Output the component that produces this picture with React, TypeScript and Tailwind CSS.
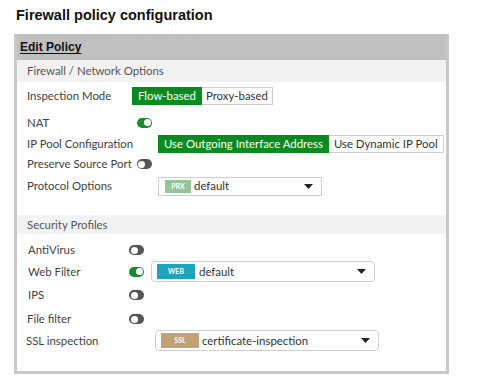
import React from "react";

function Toggle({ on }: { on?: boolean }) {
  return on ? (
    <span className="relative inline-block h-[10px] w-[15px] shrink-0 rounded-full bg-[#1b8a2b]">
      <span className="absolute right-[1.5px] top-[1.5px] h-[7px] w-[7px] rounded-full bg-white" />
    </span>
  ) : (
    <span className="relative inline-block h-[10px] w-[15px] shrink-0 rounded-full bg-[#555555]">
      <span className="absolute left-[1.5px] top-[1.5px] h-[7px] w-[7px] rounded-full bg-white" />
    </span>
  );
}

function Caret() {
  return (
    <svg width="9" height="5" viewBox="0 0 9 5" className="block">
      <path d="M0 0 H9 L4.5 5 Z" fill="#222" />
    </svg>
  );
}

export default function App() {
  return (
    <div
      className="h-[388px] w-[488px] overflow-hidden whitespace-nowrap bg-white text-[#3f3f3f]"
      style={{ fontFamily: "Lato, 'Open Sans', sans-serif" }}
    >
      <div className="flex h-[34px] items-center pl-[16px] pb-[2px] text-[14.5px] font-bold text-[#111]" style={{ fontFamily: "'Liberation Sans', Arial, sans-serif" }}>
        Firewall policy configuration
      </div>
      <div className="ml-[14px] h-[340px] w-[435px] border-[3px] border-t-0 border-[#c8c8c8]">
        <div className="flex h-[26px] items-center bg-[#c0c0c0] pl-[3px] text-[12px] font-bold text-[#111] underline underline-offset-2" style={{ fontFamily: "'Liberation Sans', Arial, sans-serif" }}>
          Edit Policy
        </div>
        <div className="flex h-[22px] items-center bg-[#f2f2f2] pl-[10px] text-[11.4px] text-[#555]">
          Firewall / Network Options
        </div>
        {/* Inspection mode */}
        <div className="flex h-[28px] items-center pl-[10px] text-[11.4px]">
          <span className="w-[105px]">Inspection Mode</span>
          <div className="flex h-[18px]">
            <span className="flex items-center bg-[#0b8a1f] px-[6px] text-white">Flow-based</span>
            <span className="flex items-center border border-l-0 border-[#cfcfcf] px-[4px] text-[#333]">Proxy-based</span>
          </div>
        </div>
        {/* NAT */}
        <div className="flex h-[23px] items-center pl-[10px] pt-[2px] text-[11.4px]">
          <span className="w-[110px]">NAT</span>
          <Toggle on />
        </div>
        {/* IP Pool */}
        <div className="flex h-[21px] items-center pl-[10px] text-[11.4px]">
          <span className="w-[131px]">IP Pool Configuration</span>
          <div className="flex h-[18px]">
            <span className="flex items-center bg-[#0b8a1f] px-[6px] text-white">Use Outgoing Interface Address</span>
            <span className="flex items-center border border-l-0 border-[#cfcfcf] px-[5px] text-[#333]">Use Dynamic IP Pool</span>
          </div>
        </div>
        {/* Preserve */}
        <div className="flex h-[20px] items-center pl-[10px] text-[11.4px]">
          <span className="mr-[5px]">Preserve Source Port</span>
          <Toggle />
        </div>
        {/* Protocol options */}
        <div className="flex h-[24px] items-center pl-[10px] text-[11.4px]">
          <span className="w-[131px]">Protocol Options</span>
          <div className="flex h-[19px] w-[164px] items-center border border-[#cfcfcf] pl-[6px] pr-[8px]">
            <span className="flex h-[13px] w-[26px] items-center justify-center bg-[#93c59b] text-[7px] font-bold text-white">PRX</span>
            <span className="ml-[3px] flex-1 text-[#333]">default</span>
            <Caret />
          </div>
        </div>
        <div className="h-[17px]" />
        <div className="flex h-[19px] items-center bg-[#f2f2f2] pl-[10px] text-[11.4px] text-[#555]">
          Security Profiles
        </div>
        <div className="h-[5px]" />
        {/* AntiVirus */}
        <div className="flex h-[22px] items-center pl-[11px] text-[11.4px]">
          <span className="w-[101px]">AntiVirus</span>
          <Toggle />
        </div>
        {/* Web filter */}
        <div className="flex h-[21px] items-center pl-[11px] text-[11.4px]">
          <span className="w-[101px]">Web Filter</span>
          <Toggle on />
          <div className="ml-[7px] flex h-[21px] w-[224px] items-center rounded-[4px] border border-[#cfcfcf] pl-[5px] pr-[8px]">
            <span className="flex h-[15px] w-[38px] items-center justify-center bg-[#1ea3bd] text-[7px] font-bold text-white">WEB</span>
            <span className="ml-[4px] flex-1 text-[#333]">default</span>
            <Caret />
          </div>
        </div>
        {/* IPS */}
        <div className="flex h-[26px] items-center pl-[11px] text-[11.4px]">
          <span className="w-[101px]">IPS</span>
          <Toggle />
        </div>
        {/* File filter */}
        <div className="flex h-[22px] items-center pl-[10px] text-[11.4px]">
          <span className="w-[102px]">File filter</span>
          <Toggle />
        </div>
        {/* SSL */}
        <div className="flex h-[21px] items-center pl-[9px] text-[11.4px]">
          <span className="w-[129px]">SSL inspection</span>
          <div className="flex h-[21px] w-[224px] items-center rounded-[4px] border border-[#cfcfcf] pl-[5px] pr-[8px]">
            <span className="flex h-[15px] w-[38px] items-center justify-center bg-[#c2a274] text-[7px] font-bold text-white">SSL</span>
            <span className="ml-[3px] flex-1 text-[#333]">certificate-inspection</span>
            <Caret />
          </div>
        </div>
      </div>
    </div>
  );
}
